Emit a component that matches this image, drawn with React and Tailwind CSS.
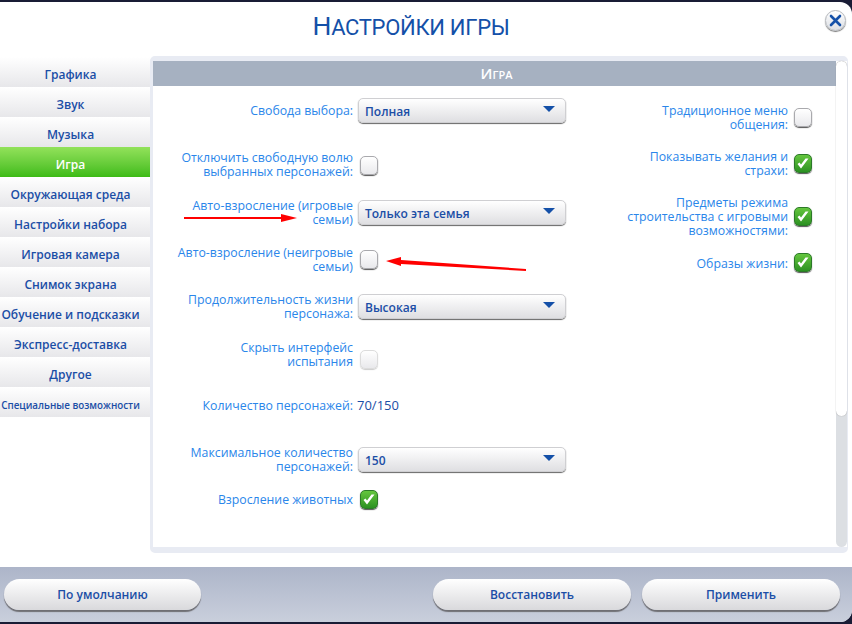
const FONT = "font-['Open_Sans','Noto_Sans',sans-serif]";

const menu = [
    'Графика', 'Звук', 'Музыка', 'Игра', 'Окружающая среда', 'Настройки набора',
    'Игровая камера', 'Снимок экрана', 'Обучение и подсказки', 'Экспресс-доставка', 'Другое',
];

function SideItem({ label, active, small }) {
    const colors = active
        ? 'bg-gradient-to-b from-[#92e25a] to-[#3cbb14] text-white'
        : 'bg-gradient-to-b from-white to-[#e7e7ea] text-[#1b4ea6]';
    return (
        <div className={`h-[30px] w-full pr-[9px] text-center font-semibold ${small ? 'pt-[7px] text-[9.8px] leading-[24px] whitespace-nowrap' : 'pt-[6px] text-[12px] leading-[24px]'} ${colors}`}>
            {label}
        </div>
    );
}

function Check({ on, faded }) {
    if (on) {
        return (
            <div className="flex h-[19px] w-[18px] shrink-0 items-center justify-center rounded-[5px] border border-[#2c7a28] bg-gradient-to-b from-[#64c63e] to-[#2b9122] shadow-[0_1px_1px_#555]">
                <svg width="14" height="13" viewBox="0 0 14 13">
                    <path d="M1.5 7 L5 11.5 L12.5 1.5 L9.5 1.5 L5 7.5 L3.5 5.5 Z" fill="#fff" />
                </svg>
            </div>
        );
    }
    return (
        <div className={`h-[19px] w-[18px] shrink-0 rounded-[5px] bg-gradient-to-b from-white to-[#e9e9ec] ${faded ? 'border border-[#dcdcdc] shadow-[0_1px_1px_#ccc]' : 'border border-[#a9a9ad] shadow-[0_1px_1px_#555]'}`} />
    );
}

function Select({ value }) {
    return (
        <div className="-mt-[1px] flex h-[25px] w-[208px] shrink-0 items-center justify-between rounded-[5px] border border-[#cfcfd2] bg-gradient-to-b from-white to-[#dfdfe2] pl-[6px] pr-[10px] text-[12px] font-semibold text-[#1b4ea6] shadow-[0_1px_1px_#666]">
            <span className="pt-[2px]">{value}</span>
            <svg width="12" height="6" viewBox="0 0 12 6" className="mb-[4px]">
                <path d="M0 0 H12 L6 6 Z" fill="#1450a8" />
            </svg>
        </div>
    );
}

function Row({ label, children, className, labelClass = '' }) {
    return (
        <div className={`flex h-[36px] items-center gap-[5px] ${className}`}>
            <div className={`w-[200px] text-right text-[12.3px] leading-[14px] text-[#2a86ea] ${labelClass}`}>{label}</div>
            {children}
        </div>
    );
}

function RightRow({ label, on, className }) {
    return (
        <div className={`flex items-center justify-end gap-[6px] ${className}`}>
            <div className="pt-[2px] text-right text-[12.3px] leading-[14px] text-[#2a86ea]">{label}</div>
            <Check on={on} />
        </div>
    );
}

function FootButton({ label, className }) {
    return (
        <button className={`h-[31px] rounded-full bg-gradient-to-b from-white to-[#d9d9dc] text-[12px] font-semibold text-[#1b4ea6] shadow-[0_2px_1px_#6f6f74] ${className}`}>
            {label}
        </button>
    );
}

export default function App() {
    return (
        <div className={`h-[624px] w-[852px] overflow-hidden bg-[#191c35] pt-[2px] ${FONT}`}>
            <div className="relative flex h-[620px] flex-col overflow-hidden rounded-tr-[12px] rounded-br-[12px] bg-white">
                <div className="flex h-[54px] items-start justify-center pr-[30px]">
                    <h1 className="pt-[3px] font-['Roboto',sans-serif] text-[26.5px] leading-[42px] tracking-[-0.3px] text-[#1450a8]">
                        Н<span className="text-[22px] uppercase">астройки игры</span>
                    </h1>
                </div>

                {/* закрыть */}
                <div className="absolute right-[6px] top-[8px] flex h-[21px] w-[21px] items-center justify-center rounded-full border border-[#b5b8bd] bg-gradient-to-b from-white to-[#dcdfe4] shadow-[0_1px_1px_#777]">
                    <svg width="13" height="13" viewBox="0 0 13 13">
                        <path d="M2 2 L11 11 M11 2 L2 11" stroke="#1450a8" strokeWidth="2.6" strokeLinecap="round" />
                    </svg>
                </div>

                <div className="flex h-[511px] items-start">
                    <div className="mt-[1px] flex w-[150px] flex-col">
                        {menu.map((m) => (
                            <SideItem key={m} label={m} active={m === 'Игра'} />
                        ))}
                        <SideItem label="Специальные возможности" small />
                    </div>

                    {/* панель настроек */}
                    <div className="flex h-[497px] w-[698px] rounded-[5px] border-t-[5px] border-b-[6px] border-l-[3px] border-r-[1px] border-[#e8ebf3]">
                        <div className="flex min-w-0 flex-1 flex-col">
                            <div className="h-[25px] bg-[#a6b1c1] pl-[4px] text-center text-[15px] font-semibold leading-[24px] text-white [font-variant:small-caps]">Игра</div>
                            <div className="flex flex-1">
                                <div className="w-[413px] pt-[5px]">
                                    <Row label="Свобода выбора:" className="mt-[2px]"><Select value="Полная" /></Row>
                                    <Row label={<>Отключить свободную волю<br />выбранных персонажей:</>} className="mt-[18px]"><div className="ml-[2px]"><Check /></div></Row>
                                    <Row label={<>Авто-взросление (игровые<br />семьи)</>} className="mt-[12px]"><Select value="Только эта семья" /></Row>
                                    <Row label={<>Авто-взросление (неигровые<br />семьи)</>} className="mt-[10px]" labelClass="pt-[2px]"><div className="ml-[2px]"><Check /></div></Row>
                                    <Row label={<>Продолжительность жизни<br />персонажа:</>} className="mt-[12px]"><Select value="Высокая" /></Row>
                                    <Row label={<>Скрыть интерфейс<br />испытания</>} className="mt-[16px]" labelClass="pb-[9px]"><div className="ml-[2px]"><Check faded /></div></Row>
                                    <Row label="Количество персонажей:" className="mt-[11px]"><span className="-ml-[1px] text-[13px] font-medium text-[#1b4ea6]">70/150</span></Row>
                                    <Row label={<>Максимальное количество<br />персонажей:</>} className="mt-[18px]"><Select value="150" /></Row>
                                    <Row label="Взросление животных" className="mt-[3px]" labelClass="pt-[2px]"><div className="ml-[2px]"><Check on /></div></Row>
                                </div>
                                <div className="flex-1 pr-[24px]">
                                    <RightRow label={<>Традиционное меню<br />общения:</>} className="mt-[16px]" />
                                    <RightRow label={<>Показывать желания и<br />страхи:</>} on className="mt-[16px]" />
                                    <RightRow label={<>Предметы режима<br />строительства с игровыми<br />возможностями:</>} on className="mt-[16px]" />
                                    <RightRow label="Образы жизни:" on className="mt-[15px]" />
                                </div>
                            </div>
                        </div>
                        {/* скролл */}
                        <div className="w-[11px] shrink-0 rounded-full bg-[#dcdfe3]">
                            <div className="h-[355px] rounded-full bg-white shadow-[0_0_1px_#888]" />
                        </div>
                    </div>
                </div>

                <div className="flex h-[55px] items-start justify-between bg-gradient-to-b from-[#adb5c9] to-[#c9cfdc] pl-[4px] pr-[12px] pt-[12px]">
                    <FootButton label="По умолчанию" className="w-[197px]" />
                    <div className="flex gap-[11px]">
                        <FootButton label="Восстановить" className="w-[198px]" />
                        <FootButton label="Применить" className="w-[198px]" />
                    </div>
                </div>

                {/* красные стрелки поверх скриншота */}
                <svg className="pointer-events-none absolute left-0 top-[-2px]" width="852" height="624" viewBox="0 0 852 624">
                    <path d="M184 217 L281 217 L281 214 L297 218 L281 222 L281 219 L184 219 Z" fill="#f00" />
                    <path d="M386 261 L401 257 L401 260 L526 269 L526 271 L401 264 L401 266 Z" fill="#f00" />
                </svg>
            </div>
        </div>
    );
}
